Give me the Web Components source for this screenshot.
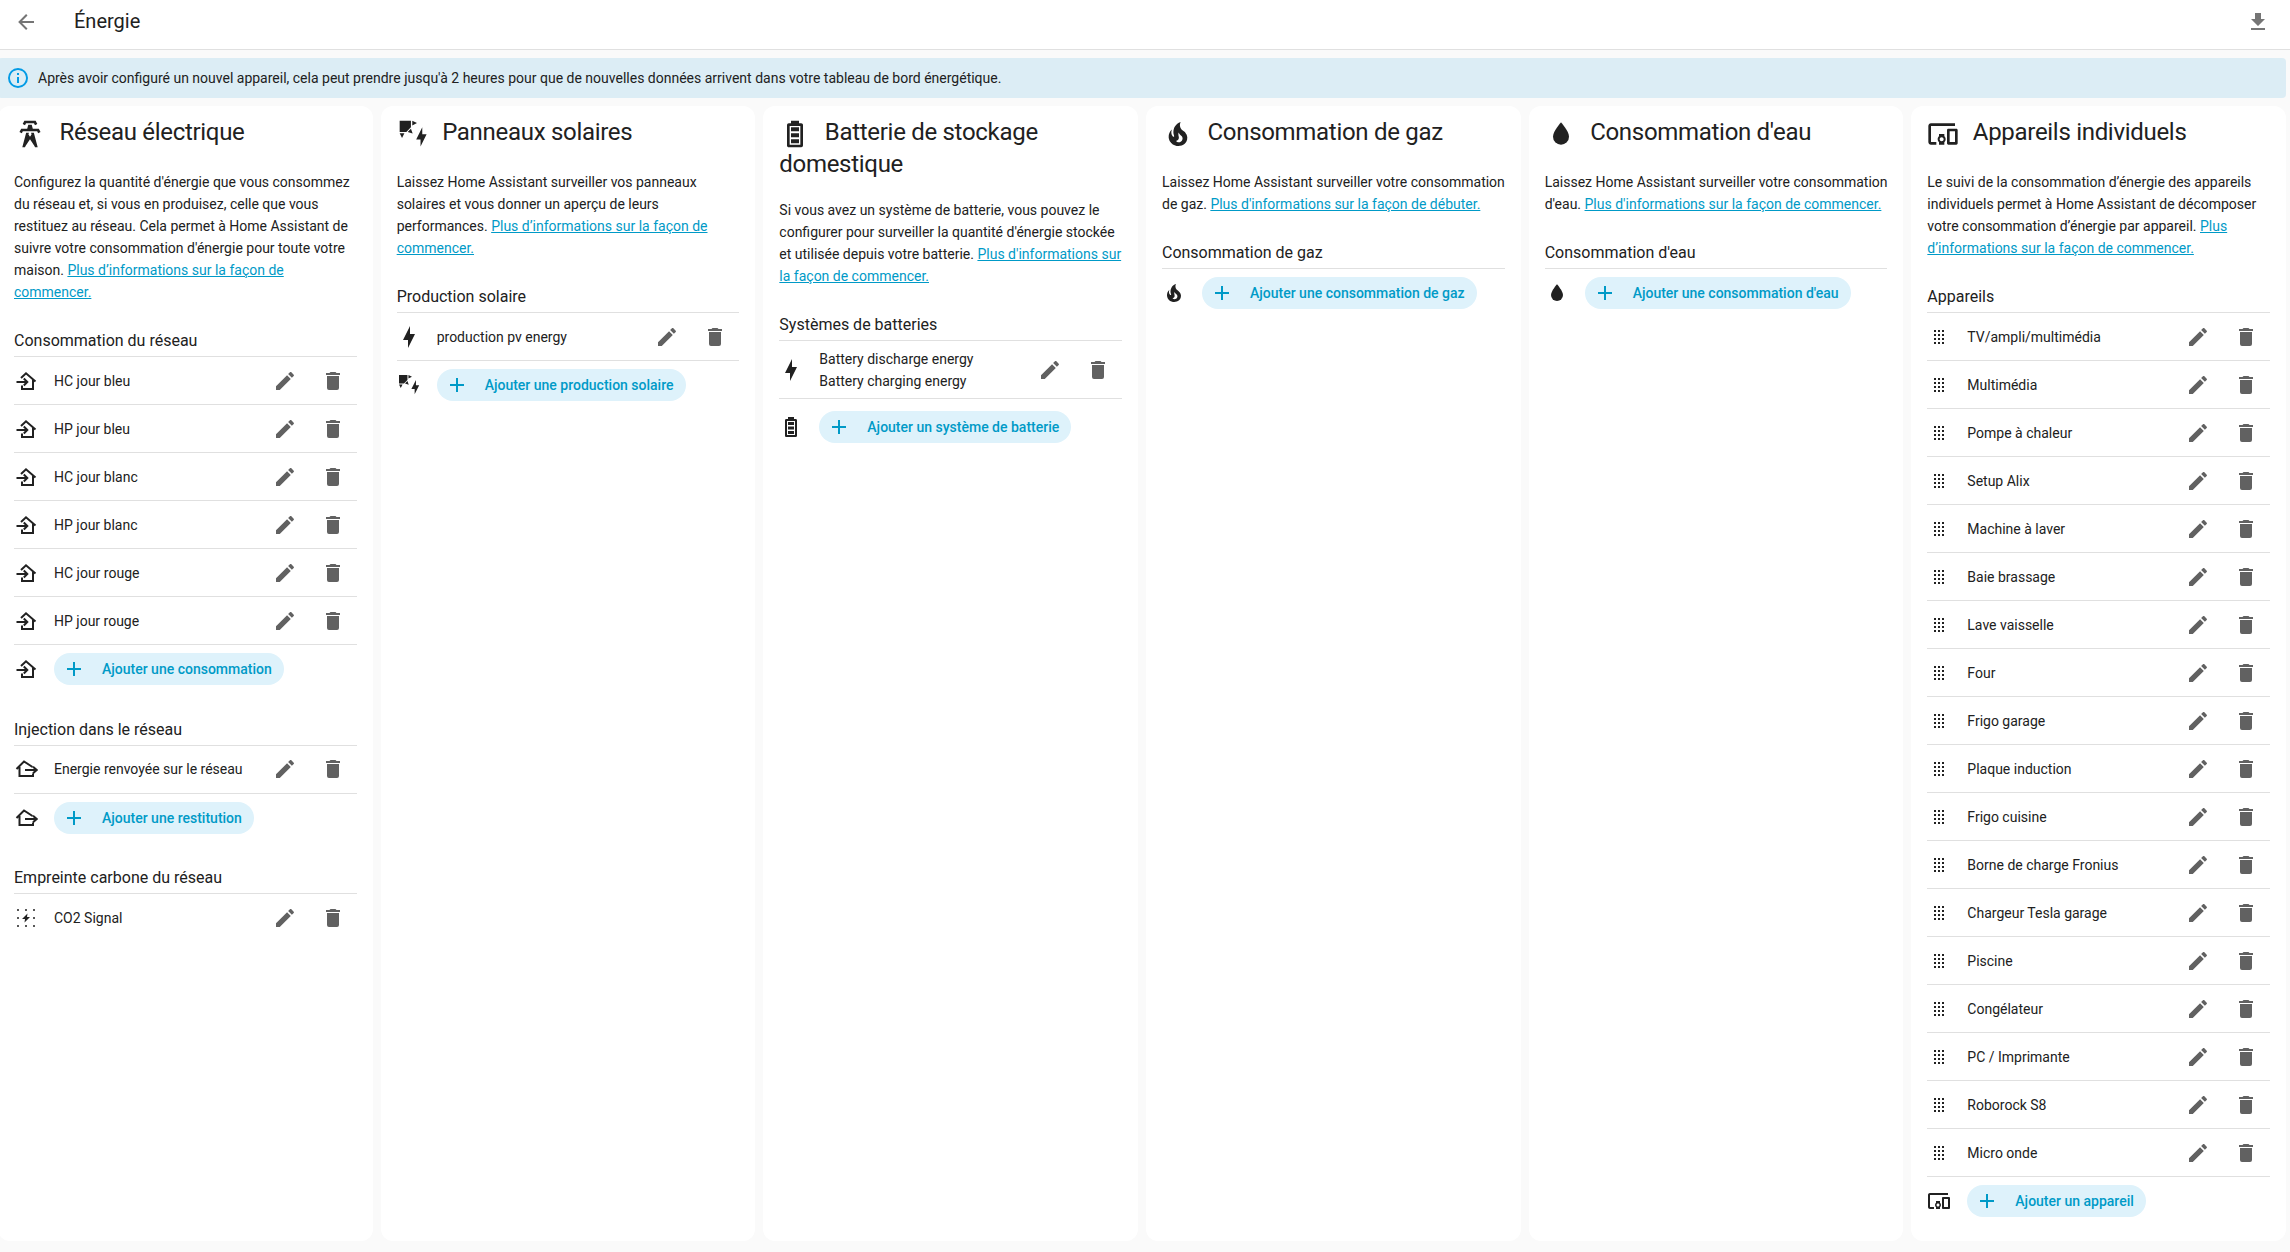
<!DOCTYPE html>
<html lang="fr">
<head>
<meta charset="utf-8">
<title>Énergie</title>
<style>
  html, body { margin: 0; height: 100%; overflow: hidden; }
  body {
    background: #fafafa;
    color: #212121;
    font-family: Roboto, "Liberation Sans", sans-serif;
  }
  energy-page a { color: #009ac7; }
</style>
</head>
<body>
<energy-page>
  <energy-header slot="header" title="Énergie"></energy-header>
  <energy-banner slot="banner">Après avoir configuré un nouvel appareil, cela peut prendre jusqu'à 2 heures pour que de nouvelles données arrivent dans votre tableau de bord énergétique.</energy-banner>

  <energy-card icon="tower" heading="Réseau électrique">
    <span slot="intro">Configurez la quantité d'énergie que vous consommez du réseau et, si vous en produisez, celle que vous restituez au réseau. Cela permet à Home Assistant de suivre votre consommation d'énergie pour toute votre maison. <a href="#">Plus d’informations sur la façon de commencer.</a></span>
    <energy-section heading="Consommation du réseau">
      <energy-row icon="import">HC jour bleu</energy-row>
      <energy-row icon="import">HP jour bleu</energy-row>
      <energy-row icon="import">HC jour blanc</energy-row>
      <energy-row icon="import">HP jour blanc</energy-row>
      <energy-row icon="import">HC jour rouge</energy-row>
      <energy-row icon="import">HP jour rouge</energy-row>
      <energy-add icon="import">Ajouter une consommation</energy-add>
    </energy-section>
    <energy-section heading="Injection dans le réseau">
      <energy-row icon="export">Energie renvoyée sur le réseau</energy-row>
      <energy-add icon="export">Ajouter une restitution</energy-add>
    </energy-section>
    <energy-section heading="Empreinte carbone du réseau">
      <energy-row icon="co2" class="last">CO2 Signal</energy-row>
    </energy-section>
  </energy-card>

  <energy-card icon="solar" heading="Panneaux solaires">
    <span slot="intro">Laissez Home Assistant surveiller vos panneaux solaires et vous donner un aperçu de leurs performances. <a href="#">Plus d’informations sur la façon de commencer.</a></span>
    <energy-section heading="Production solaire">
      <energy-row icon="bolt">production pv energy</energy-row>
      <energy-add icon="solar">Ajouter une production solaire</energy-add>
    </energy-section>
  </energy-card>

  <energy-card icon="battery" heading="Batterie de stockage domestique">
    <span slot="intro">Si vous avez un système de batterie, vous pouvez le configurer pour surveiller la quantité d'énergie stockée et utilisée depuis votre batterie. <a href="#">Plus d'informations sur la façon de commencer.</a></span>
    <energy-section heading="Systèmes de batteries">
      <energy-row icon="bolt"><div>Battery discharge energy</div><div>Battery charging energy</div></energy-row>
      <energy-add icon="battery" style="margin-top:4px">Ajouter un système de batterie</energy-add>
    </energy-section>
  </energy-card>

  <energy-card icon="fire" heading="Consommation de gaz">
    <span slot="intro">Laissez Home Assistant surveiller votre consommation de gaz. <a href="#">Plus d'informations sur la façon de débuter.</a></span>
    <energy-section heading="Consommation de gaz">
      <energy-add icon="fire">Ajouter une consommation de gaz</energy-add>
    </energy-section>
  </energy-card>

  <energy-card icon="water" heading="Consommation d'eau">
    <span slot="intro">Laissez Home Assistant surveiller votre consommation d'eau. <a href="#">Plus d'informations sur la façon de commencer.</a></span>
    <energy-section heading="Consommation d'eau">
      <energy-add icon="water">Ajouter une consommation d'eau</energy-add>
    </energy-section>
  </energy-card>

  <energy-card icon="devices" heading="Appareils individuels">
    <span slot="intro">Le suivi de la consommation d’énergie des appareils individuels permet à Home Assistant de décomposer votre consommation d’énergie par appareil. <a href="#">Plus d’informations sur la façon de commencer.</a></span>
    <energy-section heading="Appareils">
      <energy-row icon="drag">TV/ampli/multimédia</energy-row>
      <energy-row icon="drag">Multimédia</energy-row>
      <energy-row icon="drag">Pompe à chaleur</energy-row>
      <energy-row icon="drag">Setup Alix</energy-row>
      <energy-row icon="drag">Machine à laver</energy-row>
      <energy-row icon="drag">Baie brassage</energy-row>
      <energy-row icon="drag">Lave vaisselle</energy-row>
      <energy-row icon="drag">Four</energy-row>
      <energy-row icon="drag">Frigo garage</energy-row>
      <energy-row icon="drag">Plaque induction</energy-row>
      <energy-row icon="drag">Frigo cuisine</energy-row>
      <energy-row icon="drag">Borne de charge Fronius</energy-row>
      <energy-row icon="drag">Chargeur Tesla garage</energy-row>
      <energy-row icon="drag">Piscine</energy-row>
      <energy-row icon="drag">Congélateur</energy-row>
      <energy-row icon="drag">PC / Imprimante</energy-row>
      <energy-row icon="drag">Roborock S8</energy-row>
      <energy-row icon="drag">Micro onde</energy-row>
      <energy-add icon="devices">Ajouter un appareil</energy-add>
    </energy-section>
  </energy-card>
</energy-page>

<script>
const ICONS = {
  back: `<path d="M20,11V13H8L13.5,18.5L12.08,19.92L4.16,12L12.08,4.08L13.5,5.5L8,11H20Z"/>`,
  download: `<path d="M5,20H19V18H5M19,9H15V3H9V9H5L12,16L19,9Z"/>`,
  info: `<path d="M11,9H13V7H11M12,20C7.59,20 4,16.41 4,12C4,7.59 7.59,4 12,4C16.41,4 20,7.59 20,12C20,16.41 16.41,20 12,20M12,2A10,10 0 0,0 2,12A10,10 0 0,0 12,22A10,10 0 0,0 22,12A10,10 0 0,0 12,2M11,17H13V11H11V17Z"/>`,
  pencil: `<path d="M20.71,7.04C21.1,6.65 21.1,6 20.71,5.63L18.37,3.29C18,2.9 17.35,2.9 16.96,3.29L15.12,5.12L18.87,8.87M3,17.25V21H6.75L17.81,9.93L14.06,6.18L3,17.25Z"/>`,
  trash: `<path d="M19,4H15.5L14.5,3H9.5L8.5,4H5V6H19M6,19A2,2 0 0,0 8,21H16A2,2 0 0,0 18,19V7H6V19Z"/>`,
  plus: `<path d="M19,13H13V19H11V13H5V11H11V5H13V11H19V13Z"/>`,
  bolt: `<path d="M11,15H6L13,1V9H18L11,23V15Z"/>`,
  fire: `<path d="M17.66 11.2C17.43 10.9 17.15 10.64 16.89 10.38C16.22 9.78 15.46 9.35 14.82 8.72C13.33 7.26 13 4.85 13.95 3C13 3.23 12.17 3.75 11.46 4.32C8.87 6.4 7.85 10.07 9.07 13.22C9.11 13.32 9.15 13.42 9.15 13.55C9.15 13.77 9 13.97 8.8 14.05C8.57 14.15 8.33 14.09 8.14 13.93C8.08 13.88 8.04 13.83 8 13.76C6.87 12.33 6.69 10.28 7.45 8.64C5.78 10 4.87 12.3 5 14.47C5.06 14.97 5.12 15.47 5.29 15.97C5.43 16.57 5.7 17.17 6 17.7C7.08 19.43 8.95 20.67 10.96 20.92C13.1 21.19 15.39 20.8 17.03 19.32C18.86 17.66 19.5 15 18.56 12.72L18.43 12.46C18.28 12.13 17.66 11.2 17.66 11.2M14.5 17.5C14.22 17.74 13.76 18 13.4 18.1C12.28 18.5 11.16 17.94 10.5 17.28C11.69 17 12.4 16.12 12.61 15.23C12.78 14.43 12.46 13.77 12.33 13C12.21 12.26 12.23 11.63 12.5 10.94C12.69 11.32 12.89 11.7 13.13 12C13.9 13 15.11 13.44 15.37 14.8C15.41 14.94 15.43 15.08 15.43 15.23C15.46 16.05 15.1 16.95 14.5 17.5H14.5Z"/>`,
  water: `<path d="M12,20A6,6 0 0,1 6,14C6,10 12,3.25 12,3.25C12,3.25 18,10 18,14A6,6 0 0,1 12,20Z"/>`,
  battery: `<path d="M16,20H8V6H16M16.67,4H15V2H9V4H7.33A1.33,1.33 0 0,0 6,5.33V20.67C6,21.4 6.6,22 7.33,22H16.67A1.33,1.33 0 0,0 18,20.67V5.33C18,4.6 17.4,4 16.67,4M15,16H9V19H15V16M15,7H9V10H15V7M15,11.5H9V14.5H15V11.5Z"/>`,
  devices: `<path d="M3 6H21V4H3C1.9 4 1 4.9 1 6V18C1 19.1 1.9 20 3 20H7V18H3V6M13 12H9V13.78C8.39 14.33 8 15.11 8 16C8 16.89 8.39 17.67 9 18.22V20H13V18.22C13.61 17.67 14 16.88 14 16S13.61 14.33 13 13.78V12M11 17.5C10.17 17.5 9.5 16.83 9.5 16S10.17 14.5 11 14.5 12.5 15.17 12.5 16 11.83 17.5 11 17.5M22 8H16C15.5 8 15 8.5 15 9V19C15 19.5 15.5 20 16 20H22C22.5 20 23 19.5 23 19V9C23 8.5 22.5 8 22 8M21 18H17V10H21V18Z"/>`,
  tower: `<path d="M8.28,5.45L6.5,4.55L7.76,2H16.23L17.5,4.55L15.72,5.44L15,4H9L8.28,5.45M18.62,8H14.09L13.3,5H10.7L9.91,8H5.38L4.1,10.55L5.89,11.44L6.62,10H17.38L18.1,11.45L19.89,10.56L18.62,8M17.77,22H15.7L15.46,21.1L12,15.9L8.53,21.1L8.3,22H6.23L9.12,11H11.19L10.83,12.35L12,14.1L13.16,12.35L12.81,11H14.88L17.77,22Z"/>`,
  solar: `<path d="M2,2H10.45V7L7,10.45H2Z M11.45,2V5.55L15,3.77Z M10.45,8L8,10.46L11.75,11.71Z M2,11.45L3.77,15L5.55,11.45Z M17.65,16.1H14.4L18.95,7V12.2H22.2L17.65,21.3Z"/>`,
  drag: `<path d="M7,19V17H9V19H7M11,19V17H13V19H11M15,19V17H17V19H15M7,15V13H9V15H7M11,15V13H13V15H11M15,15V13H17V15H15M7,11V9H9V11H7M11,11V9H13V11H11M15,11V9H17V11H15M7,7V5H9V7H7M11,7V5H13V7H11M15,7V5H17V7H15Z"/>`,
  import: `<path fill="none" stroke="currentColor" stroke-width="2" d="M7,9L12,4.3L21.5,12.5M19,10.5V20H8V16.5M2.5,13H13M9.8,9.5L13.3,13L9.8,16.5"/>`,
  export: `<path fill="none" stroke="currentColor" stroke-width="2" d="M2.5,12L10,4.5L18.5,10M5.5,10V19H19V16.5M11,13H22.5M19,9.7L22.7,13L19,16.3"/>`,
  co2: `<path d="M13.5,7.5L8,13H11L10.5,16.5L16,11H13Z"/><circle cx="4" cy="4" r="1"/><circle cx="12" cy="4" r="1"/><circle cx="20" cy="4" r="1"/><circle cx="4" cy="12" r="1"/><circle cx="20" cy="12" r="1"/><circle cx="4" cy="20" r="1"/><circle cx="12" cy="20" r="1"/><circle cx="20" cy="20" r="1"/>`,
};

class MdiIcon extends HTMLElement {
  constructor() {
    super();
    const name = this.getAttribute("name");
    this.attachShadow({ mode: "open" }).innerHTML = `
      <style>
        :host { display: inline-flex; width: var(--icon-size, 24px); height: var(--icon-size, 24px); flex: none; }
        svg { width: 100%; height: 100%; fill: currentColor; display: block; }
      </style>
      <svg viewBox="0 0 24 24">${ICONS[name] || ""}</svg>`;
  }
}
customElements.define("mdi-icon", MdiIcon);

class EnergyPage extends HTMLElement {
  constructor() {
    super();
    this.attachShadow({ mode: "open" }).innerHTML = `
      <style>
        :host { display: flex; flex-direction: column; height: 100vh; box-sizing: border-box; padding-bottom: 11px; overflow: hidden; }
        main { flex: 1; min-height: 0; display: flex; flex-direction: column; gap: 8px; margin: 8px 0 0 -2px; width: 2288px; }
        .cards { flex: 1; min-height: 0; display: grid; grid-template-columns: repeat(6, minmax(0, 1fr)); gap: 8px; }
      </style>
      <slot name="header"></slot>
      <main>
        <slot name="banner"></slot>
        <div class="cards"><slot></slot></div>
      </main>`;
  }
}
customElements.define("energy-page", EnergyPage);

class EnergyHeader extends HTMLElement {
  constructor() {
    super();
    const title = this.getAttribute("title") || "";
    this.attachShadow({ mode: "open" }).innerHTML = `
      <style>
        :host { display: flex; align-items: center; height: 49px; background: #fff; border-bottom: 1px solid #e0e0e0; padding: 0 20px 0 14px; }
        mdi-icon { color: #757575; margin-top: -5px; }
        .title { flex: 1; margin-left: 36px; font-size: 20px; line-height: 28px; color: #212121; margin-top: -8px; }
      </style>
      <mdi-icon name="back"></mdi-icon>
      <div class="title">${title}</div>
      <mdi-icon name="download"></mdi-icon>`;
  }
}
customElements.define("energy-header", EnergyHeader);

class EnergyBanner extends HTMLElement {
  constructor() {
    super();
    this.attachShadow({ mode: "open" }).innerHTML = `
      <style>
        :host { display: flex; align-items: center; height: 40px; box-sizing: border-box; padding: 0 8px; gap: 8px; background: #dcedf5; border-radius: 4px; font-size: 14px; color: #212121; }
        mdi-icon { color: #039be5; }
      </style>
      <mdi-icon name="info"></mdi-icon>
      <div><slot></slot></div>`;
  }
}
customElements.define("energy-banner", EnergyBanner);

class EnergyCard extends HTMLElement {
  constructor() {
    super();
    const icon = this.getAttribute("icon");
    const heading = this.getAttribute("heading");
    this.attachShadow({ mode: "open" }).innerHTML = `
      <style>
        :host { display: block; background: #fff; border-radius: 12px; padding: 0 16px; min-width: 0; overflow: hidden; }
        h1 { margin: 12px 0 0; font-size: 24px; font-weight: 400; line-height: 28px; letter-spacing: -0.3px; color: #212121; }
        h1 mdi-icon { --icon-size: 32px; vertical-align: middle; margin-right: 13.5px; }
        p { margin: 21px -2px 0 0; font-size: 14px; line-height: 22px; color: #212121; }
      </style>
      <h1><mdi-icon name="${icon}"></mdi-icon>${heading}</h1>
      <p><slot name="intro"></slot></p>
      <slot></slot>`;
  }
}
customElements.define("energy-card", EnergyCard);

class EnergySection extends HTMLElement {
  constructor() {
    super();
    const heading = this.getAttribute("heading");
    this.attachShadow({ mode: "open" }).innerHTML = `
      <style>
        :host { display: block; margin-top: 26px; }
        h3 { margin: 0; font-size: 16px; font-weight: 400; line-height: 24px; padding-bottom: 3px; border-bottom: 1px solid #e0e0e0; color: #212121; }
      </style>
      <h3>${heading}</h3>
      <slot></slot>`;
  }
}
customElements.define("energy-section", EnergySection);

class EnergyRow extends HTMLElement {
  constructor() {
    super();
    const icon = this.getAttribute("icon");
    this.attachShadow({ mode: "open" }).innerHTML = `
      <style>
        :host { display: flex; align-items: center; box-sizing: border-box; min-height: 48px; padding: 6.5px 0; border-bottom: 1px solid #e0e0e0; font-size: 14px; line-height: 22px; color: #212121; }
        :host(.last) { border-bottom: none; }
        .text { flex: 1; min-width: 0; margin-left: 16px; }
        .action { width: 48px; height: 34px; display: flex; align-items: center; justify-content: center; color: #616161; }
      </style>
      <mdi-icon name="${icon}"></mdi-icon>
      <div class="text"><slot></slot></div>
      <div class="action"><mdi-icon name="pencil"></mdi-icon></div>
      <div class="action"><mdi-icon name="trash"></mdi-icon></div>`;
  }
}
customElements.define("energy-row", EnergyRow);

class EnergyAdd extends HTMLElement {
  constructor() {
    super();
    const icon = this.getAttribute("icon");
    this.attachShadow({ mode: "open" }).innerHTML = `
      <style>
        :host { display: flex; align-items: center; gap: 16px; padding: 8px 0 6.5px; }
        .pill { display: inline-flex; align-items: center; height: 32px; gap: 16px; padding: 0 12px 0 8px; border-radius: 16px; background: #def2fb; color: #009ac7; font-size: 14px; font-weight: 500; }
      </style>
      <mdi-icon name="${icon}"></mdi-icon>
      <div class="pill"><mdi-icon name="plus"></mdi-icon><span><slot></slot></span></div>`;
  }
}
customElements.define("energy-add", EnergyAdd);
</script>
</body>
</html>
